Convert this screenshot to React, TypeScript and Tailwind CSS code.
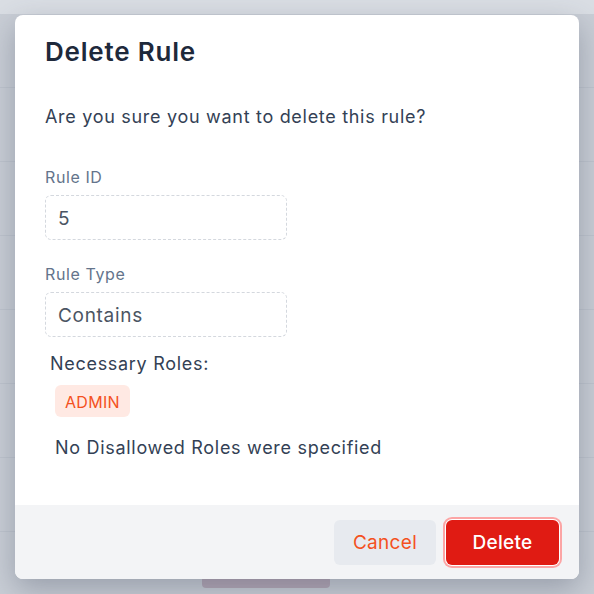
import React from "react";

const rows = [0, 1, 2, 3, 4, 5, 6, 7];

function Backdrop() {
  return (
    <div className="absolute inset-0 bg-[#c9ced6]">
      <div className="h-[14px] bg-[#dadee4]" />
      <div className="flex flex-col">
        {rows.map((r) => (
          <div key={r} className="h-[74px] border-b border-[#bfc5ce]" />
        ))}
      </div>
      <div className="absolute left-[202px] top-[576px] h-[12px] w-[128px] rounded bg-[#b4a7b6]" />
    </div>
  );
}

function Field({ label, value }: { label: string; value: string }) {
  return (
    <div className="flex flex-col">
      <span className="text-[16px] leading-6 tracking-[0.6px] text-[#64748b]">{label}</span>
      <div className="mt-[6px] flex h-[45px] w-[242px] items-center rounded-md border border-dashed border-[#d4d8de] px-[12px] pt-[3px] text-[19px] tracking-[0.7px] text-[#4b5563]">
        {value}
      </div>
    </div>
  );
}

export default function App() {
  return (
    <div
      className="relative h-[594px] w-[594px] overflow-hidden"
      style={{ fontFamily: "Inter, 'Noto Sans', sans-serif" }}
    >
      <Backdrop />
      <div className="absolute left-[15px] top-[15px] flex h-[564px] w-[564px] flex-col overflow-hidden rounded-lg bg-white shadow-[0_10px_30px_rgba(60,70,90,0.35)]">
        <div className="flex flex-1 flex-col px-[30px] pt-[21px]">
          <h2 className="text-[26px] font-semibold leading-8 tracking-[0.8px] text-[#1e293b]">Delete Rule</h2>
          <p className="mt-[35px] text-[18px] leading-7 tracking-[0.7px] text-[#334155]">
            Are you sure you want to delete this rule?
          </p>
          <div className="mt-[34px] flex flex-col gap-[22px]">
            <Field label="Rule ID" value="5" />
            <Field label="Rule Type" value="Contains" />
          </div>
          <div className="ml-[5px] mt-[13px] text-[18px] leading-7 tracking-[0.7px] text-[#334155]">
            Necessary Roles:
          </div>
          <div className="ml-[10px] mt-[7px] flex">
            <span className="flex h-[32px] items-center rounded-md bg-[#ffe9e3] px-[10px] pt-[1px] text-[16px] tracking-[0.3px] text-[#f4511e]">
              ADMIN
            </span>
          </div>
          <div className="ml-[10px] mt-[17px] text-[18px] leading-7 tracking-[0.7px] text-[#334155]">
            No Disallowed Roles were specified
          </div>
        </div>
        <div className="flex h-[74px] items-center justify-end gap-[10px] bg-[#f3f4f6] pr-[20px]">
          <button className="h-[45px] w-[102px] rounded-md bg-[#e7eaef] pt-[3px] text-[19px] tracking-[0.3px] text-[#f4511e]">
            Cancel
          </button>
          <button className="h-[45px] w-[113px] rounded-md bg-[#e01b13] pt-[3px] text-[19px] font-medium tracking-[0.3px] text-white ring-2 ring-[#fca5a5] ring-offset-1">
            Delete
          </button>
        </div>
      </div>
    </div>
  );
}
